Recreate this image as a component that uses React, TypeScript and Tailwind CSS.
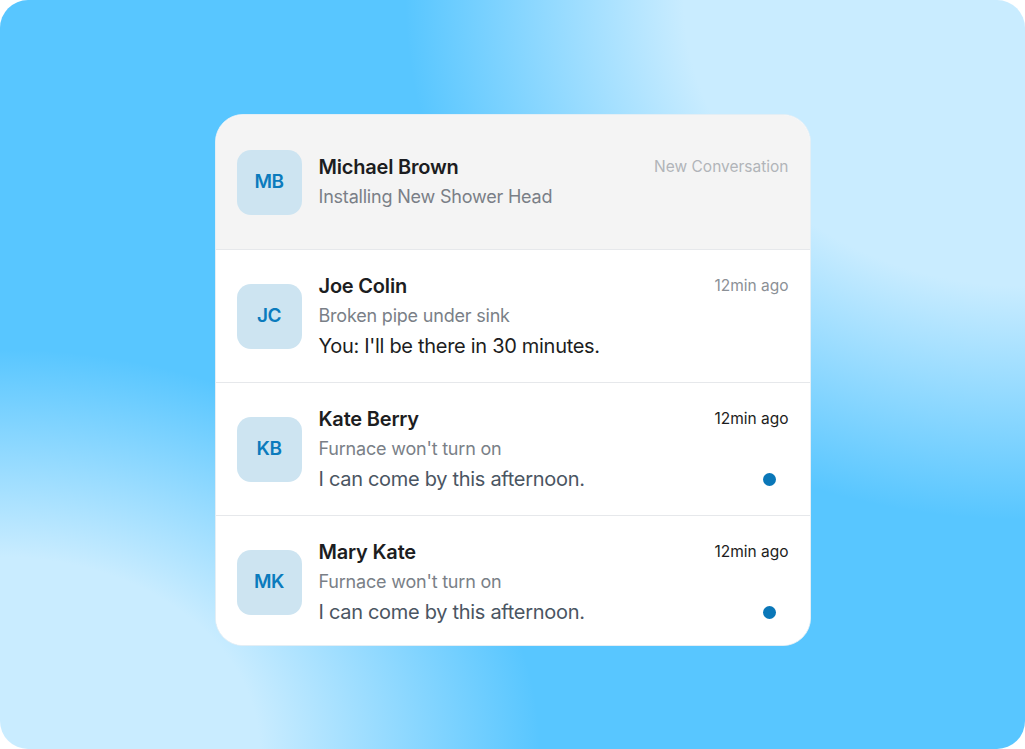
type Thread = {
  initials: string;
  name: string;
  topic: string;
  preview?: string;
  time: string;
  unread?: boolean;
  muted?: boolean;
  fresh?: boolean;
};

const threads: Thread[] = [
  { initials: "MB", name: "Michael Brown", topic: "Installing New Shower Head", time: "New Conversation", fresh: true },
  { initials: "JC", name: "Joe Colin", topic: "Broken pipe under sink", preview: "You: I'll be there in 30 minutes.", time: "12min ago", muted: true },
  { initials: "KB", name: "Kate Berry", topic: "Furnace won't turn on", preview: "I can come by this afternoon.", time: "12min ago", unread: true },
  { initials: "MK", name: "Mary Kate", topic: "Furnace won't turn on", preview: "I can come by this afternoon.", time: "12min ago", unread: true },
];

function ThreadRow({ t }: { t: Thread }) {
  return (
    <div
      className={`flex h-[133px] items-center pl-[21px] pr-[21px] ${
        t.fresh ? "h-[134px] bg-[#f4f4f4]" : "border-t border-[#e6e8eb] bg-white"
      }`}
    >
      <div className="flex h-[65px] w-[65px] shrink-0 items-center justify-center rounded-[14px] bg-[#cde4f1] text-[19px] font-semibold tracking-tight text-[#0b7bbd]">
        {t.initials}
      </div>
      <div className="ml-[17px] flex min-w-0 flex-1 flex-col">
        <div className="flex items-center justify-between">
          <span className="text-[20px] leading-[30px] font-semibold tracking-[-0.2px] text-[#1c1d21]">{t.name}</span>
          <span
            className={`text-[15.5px] leading-[30px] ${
              t.fresh ? "text-[#b1b4b9]" : t.muted ? "text-[#8b9096]" : "text-[#1c1d21]"
            }`}
          >
            {t.time}
          </span>
        </div>
        <span className="text-[18px] leading-[30px] tracking-[-0.2px] text-[#7a7f87]">{t.topic}</span>
        {t.preview && (
          <div className="flex items-center justify-between">
            <span
              className={`text-[20px] leading-[30px] tracking-[-0.3px] ${
                t.muted ? "text-[#1c1d21]" : "text-[#4a5562]"
              }`}
            >
              {t.preview}
            </span>
            {t.unread && <span className="mr-[13px] h-[13px] w-[13px] rounded-full bg-[#0a77b8]" />}
          </div>
        )}
      </div>
    </div>
  );
}

export default function App() {
  return (
    <div className="h-[749px] w-full bg-white font-['Inter','Liberation_Sans',sans-serif]">
      <div className="flex h-full w-full justify-center overflow-hidden rounded-[28px] bg-[#58c6ff] bg-[image:radial-gradient(620px_520px_at_100%_0%,#c9ecff_0%,#c9ecff_55%,rgba(201,236,255,0)_100%),radial-gradient(540px_400px_at_0%_100%,#c9ecff_0%,#c9ecff_48%,rgba(201,236,255,0)_100%)] pt-[114px]">
        <div className="h-[532px] w-[596px] overflow-hidden rounded-[28px] border border-[#e3eef5] bg-white">
          {threads.map((t) => (
            <ThreadRow key={t.initials} t={t} />
          ))}
        </div>
      </div>
    </div>
  );
}
